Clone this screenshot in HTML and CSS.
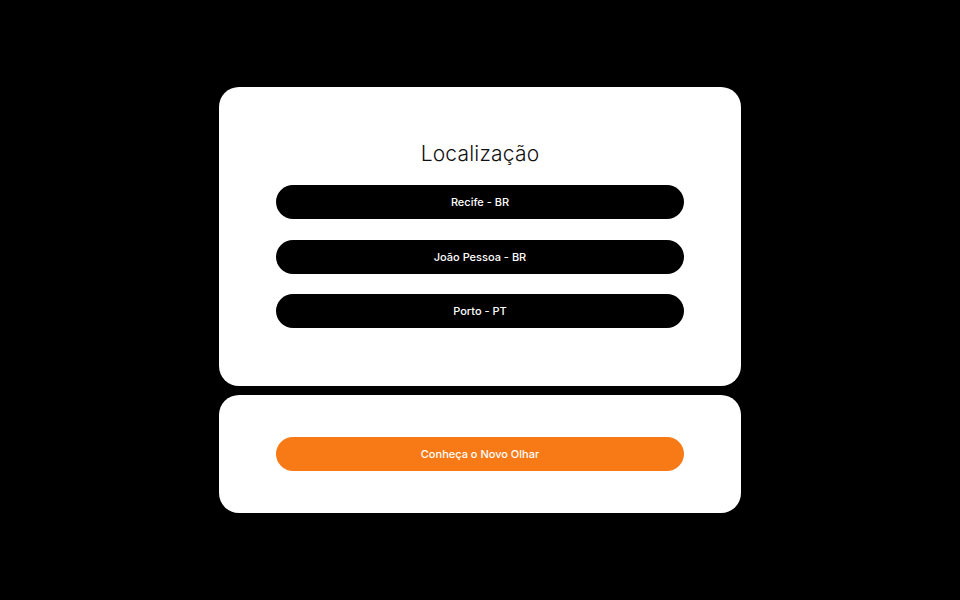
FILE: index.html
```html
<!DOCTYPE html>
<html lang="pt">
<head>
<meta charset="utf-8">
<title>Localização</title>
<link rel="stylesheet" href="styles.css">
</head>
<body>
<main class="page">
  <section class="card card-locations">
    <h1 class="title">Localização</h1>
    <div class="list">
      <a class="pill pill-dark" href="#">Recife - BR</a>
      <a class="pill pill-dark" href="#">João Pessoa - BR</a>
      <a class="pill pill-dark" href="#">Porto - PT</a>
    </div>
  </section>
  <section class="card card-cta">
    <a class="pill pill-orange" href="#">Conheça o Novo Olhar</a>
  </section>
</main>
</body>
</html>
```
FILE: styles.css
```css
html, body {
  margin: 0;
  padding: 0;
  background: #000;
  height: 100%;
}
body {
  font-family: Inter, "Noto Sans", "Liberation Sans", sans-serif;
}
.page {
  height: 600px;
  display: flex;
  flex-direction: column;
  align-items: center;
  justify-content: center;
  gap: 9px;
}
.card {
  width: 522px;
  box-sizing: border-box;
  background: #fff;
  border-radius: 20px;
  padding: 0 57px;
}
.card-locations {
  height: 299px;
  padding-top: 54px;
}
.card-cta {
  height: 118px;
  padding-top: 42px;
}
.title {
  margin: 0 0 18px;
  font-size: 21px;
  line-height: 26px;
  font-weight: 300;
  color: #111;
  text-align: center;
  letter-spacing: 0.2px;
}
.list {
  display: flex;
  flex-direction: column;
  gap: 20.5px;
}
.pill {
  display: flex;
  align-items: center;
  justify-content: center;
  height: 34px;
  border-radius: 17px;
  color: #fff;
  text-decoration: none;
  font-size: 11px;
  font-weight: 500;
}
.pill-dark {
  background: #000;
}
.pill-orange {
  background: #f77a17;
}
```
